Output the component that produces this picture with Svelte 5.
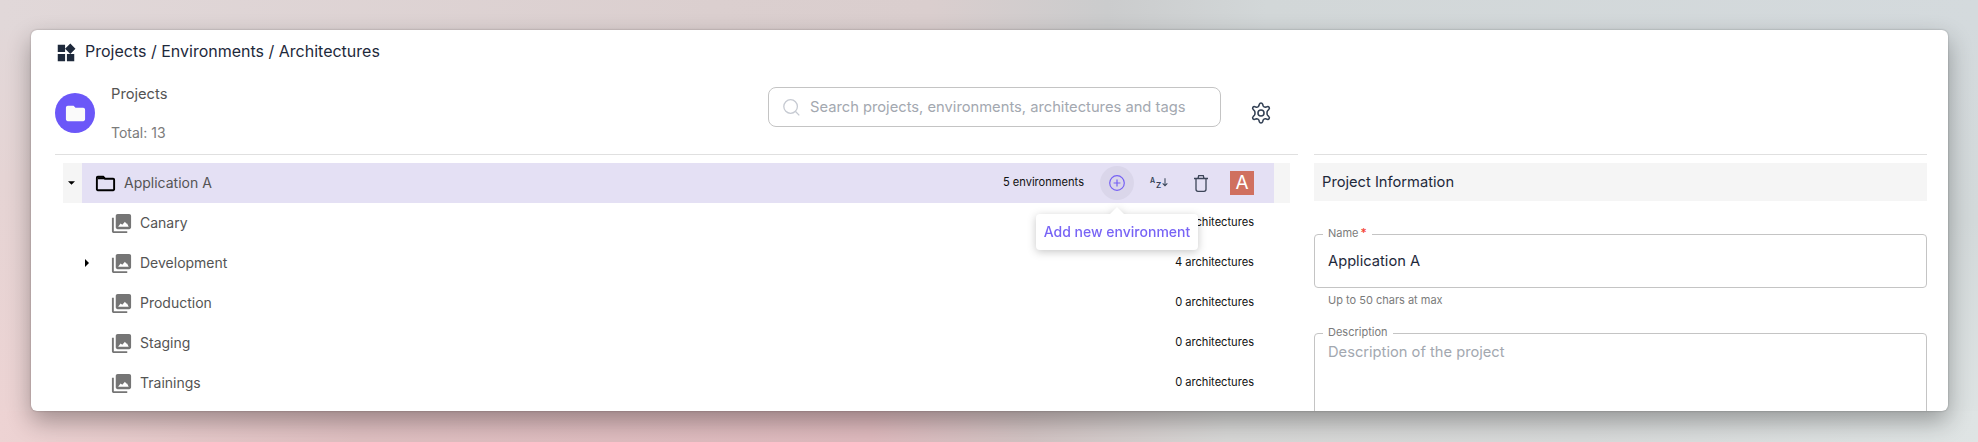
<script>
  const rows = [
    { name: 'Canary', count: '0 architectures', open: false },
    { name: 'Development', count: '4 architectures', open: true },
    { name: 'Production', count: '0 architectures', open: false },
    { name: 'Staging', count: '0 architectures', open: false },
    { name: 'Trainings', count: '0 architectures', open: false }
  ];
</script>

<div class="page">
  <main class="card">
    <header class="title">
      <svg class="widgets" viewBox="0 0 24 24"><path d="M13 13v8h8v-8zM3 21h8v-8H3zM3 3v8h8V3zm13.66-1.31L11 7.34 16.66 13l5.66-5.66z" /></svg>
      <h1>Projects / Environments / Architectures</h1>
    </header>
    <div class="columns">
      <section class="left">
        <div class="summary">
          <div class="avatar"><svg viewBox="0 0 24 24"><path d="M10 4H4c-1.1 0-2 .9-2 2v12c0 1.100.9 2 2 2h16c1.100 0 2-.9 2-2V8c0-1.100-.9-2-2-2h-8z" /></svg></div>
          <div class="totals"><span class="t1">Projects</span><span class="t2">Total: 13</span></div>
          <div class="search">
            <svg viewBox="0 0 17 17"><circle cx="7.600" cy="7.500" r="6.800" /><path d="m12.500 12.500 3.800 3.900" /></svg>
            <span>Search projects, environments, architectures and tags</span>
          </div>
          <svg class="gear" viewBox="0 0 24 24"><path d="M9.700 4.200l.5-1.800Q10.700 1 12 1t1.800 1.400l.5 1.800q.2.7 1 1.100t1.600.3l1.800-.5q1.500-.4 2.200.8t-.4 2.300l-1.300 1.400q-.6.700-.6 1.500v1.800q0 .8.6 1.500l1.300 1.400q1.100 1.100.4 2.300t-2.200.8l-1.800-.5q-.8-.2-1.600.3t-1 1.100l-.5 1.800Q13.300 23 12 23t-1.800-1.400l-.5-1.800q-.2-.7-1-1.100t-1.600-.3l-1.800.5q-1.500.4-2.200-.8t.4-2.300l1.300-1.400q.6-.7.6-1.500v-1.800q0-.8-.6-1.500L3.500 8.200Q2.400 7.100 3.100 5.900t2.200-.8l1.800.5q.8.2 1.600-.3t1-1.100z" /><circle cx="12" cy="12" r="3.300" /></svg>
        </div>
        <div class="tree">
          <div class="parent">
            <div class="toggle"><svg viewBox="0 0 8 4"><path d="M0 0h8L4 4z" /></svg></div>
            <div class="selected">
              <svg class="folder" viewBox="0 0 24 24"><path d="m9.170 6 2 2H20v10H4V6zM10 4H4c-1.100 0-1.990.9-1.990 2L2 18c0 1.100.9 2 2 2h16c1.100 0 2-.9 2-2V8c0-1.100-.9-2-2-2h-8z" /><path d="M4 5.500h5.500l2 2H4z" /></svg>
              <span class="name">Application A</span>
              <span class="count">5 environments</span>
              <div class="add">
                <svg viewBox="0 0 16 16"><circle cx="8" cy="8" r="7.300" /><path d="M8 4.600v6.800M4.600 8h6.800" /></svg>
                <div class="tip">Add new environment</div>
              </div>
              <div class="sort"><span class="a">A</span><span class="z">Z</span><svg viewBox="0 0 7 10"><path d="M3.500 0v8.700M.8 6l2.700 2.800L6.200 6" /></svg></div>
              <svg class="trash" viewBox="0 0 14 17"><path d="M0 3.500h14M2 3.700v10.600q0 2 2 2h6q2 0 2-2V3.700M4 3.500 4.700.7h4.600L10 3.500" /></svg>
              <div class="letter">A</div>
            </div>
          </div>
          {#each rows as row}
            <div class="row">
              <div class="arrow">{#if row.open}<svg viewBox="0 0 4 8"><path d="M0 0v8l4-4z" /></svg>{/if}</div>
              <svg class="stack" viewBox="0 0 24 24"><path fill-rule="evenodd" d="M22 16V4c0-1.100-.9-2-2-2H8c-1.100 0-2 .9-2 2v12c0 1.100.9 2 2 2h12c1.100 0 2-.9 2-2M8.500 15.400l2.600-3.500 1.700 1.500 2.800-3.100 1.500 2 .6-.5 1.800 3.600zM2 6v14c0 1.100.9 2 2 2h14v-2H4V6z" /></svg>
              <span class="name">{row.name}</span>
              <span class="count">{row.count}</span>
            </div>
          {/each}
        </div>
      </section>
      <section class="right">
        <h2>Project Information</h2>
        <fieldset class="field one">
          <legend>Name<b>*</b></legend>
          <div class="value">Application A</div>
        </fieldset>
        <div class="hint">Up to 50 chars at max</div>
        <fieldset class="field two">
          <legend>Description</legend>
          <div class="placeholder">Description of the project</div>
        </fieldset>
      </section>
    </div>
  </main>
</div>

<style>
  :global(body) { overflow: hidden; }
  .page, .page * { box-sizing: border-box; }
  .page {
    width: 1978px;
    height: 442px;
    padding: 30px 30px 31px 31px;
    overflow: hidden;
    font-family: Inter, sans-serif;
    background:
      linear-gradient(90deg, #e1d8d9 0, #dbcfcf 36%, #dacece 47%, #cbcccd 56%, #d2d7d8 64%, #d4dadd 100%) 0 0 / 100% 30px no-repeat,
      linear-gradient(90deg, #edd3d3 0, #dfbfc1 18%, #deb9bd 44%, #d2c3c3 52%, #d7d7d6 62%, #d8dada 80%, #dfe4e4 100%) 0 100% / 100% 31px no-repeat,
      linear-gradient(180deg, #e1d8d9 0, #e5d4d4 40%, #edd3d3 100%) 0 0 / 50% 100% no-repeat,
      linear-gradient(180deg, #d4dadd 0, #d3d9da 50%, #dfe4e4 100%) 100% 0 / 50% 100% no-repeat;
  }
  .card {
    width: 1917px;
    height: 381px;
    overflow: hidden;
    padding: 0 21px 0 24px;
    border-radius: 6px;
    background: #fff;
    box-shadow: 0 10px 24px rgba(0, 0, 0, .32), 0 0 2px rgba(0, 0, 0, .3);
  }
  .title { display: flex; align-items: center; height: 43px; gap: 8px; }
  .widgets { width: 22px; height: 22px; margin-top: 2px; fill: #1e293b; }
  h1 { margin: 0 0 2px; font-size: 16px; line-height: 24px; font-weight: 400; color: #1e293b; }
  .columns { display: flex; gap: 16px; height: 338px; }
  .left { width: 1243px; }
  .summary { display: flex; align-items: flex-start; height: 82px; border-bottom: 1px solid #e0e0e0; }
  .avatar { display: flex; align-items: center; justify-content: center; width: 40px; height: 40px; margin-top: 20px; border-radius: 50%; background: #6b57f8; }
  .avatar svg { width: 23px; height: 23px; fill: #fafafa; }
  .totals { display: flex; flex-direction: column; margin: 11px 0 0 16px; line-height: 20px; color: #545454; }
  .t1 { font-size: 14.700px; }
  .t2 { margin-top: 19px; font-size: 14px; color: #7b7b7b; }
  .search { display: flex; align-items: center; width: 453px; height: 40px; margin: 14px 0 0 auto; padding-left: 14px; border: 1px solid #c4c4c4; border-radius: 8px; color: #a3a8b0; font-size: 14.720px; gap: 10px; }
  .search svg { width: 17px; height: 17px; fill: none; stroke: #c6cad2; stroke-width: 1.3; }
  .gear { width: 22px; height: 22px; margin: 29px 26px 0 29px; overflow: visible; fill: none; stroke: #334155; stroke-width: 1.700; }
  .tree { padding: 8px 8px 0; }
  .parent { display: flex; height: 40px; padding-right: 16px; background: #f5f5f5; }
  .toggle { display: flex; align-items: center; width: 19px; padding-left: 4.500px; }
  .toggle svg { width: 7px; height: 4px; }
  .selected { display: flex; align-items: center; flex: 1; padding: 0 20px 0 12px; background: #e4e0f4; }
  .folder { width: 23px; height: 23px; margin-right: 7px; }
  .name { margin-bottom: 1px; font-size: 14px; line-height: 18px; color: #545454; }
  .count { margin: 0 0 2px auto; font-size: 11.120px; color: #111; }
  .add { position: relative; display: flex; align-items: center; justify-content: center; width: 34px; height: 34px; margin-left: 16px; border-radius: 50%; background: #dad6ea; }
  .add svg { width: 16px; height: 16px; fill: none; stroke: #7661f4; stroke-width: 1.200; }
  .tip { position: absolute; left: -64px; top: 48px; z-index: 2; width: 162px; height: 36px; border-radius: 4px; background: #fff; color: #7864f5; font-size: 14px; line-height: 36px; font-weight: 500; text-align: center; white-space: nowrap; filter: drop-shadow(0 2px 4px rgba(0, 0, 0, .22)); }
  .tip::before { content: ''; position: absolute; left: 74px; top: -7px; border: solid transparent; border-width: 0 7px 7px; border-bottom-color: #fff; }
  .sort { display: flex; justify-content: space-between; width: 18px; height: 12px; margin-left: 16px; color: #334155; font-size: 7px; line-height: 7px; font-weight: 600; }
  .z { margin-top: 5px; font-size: 8px; }
  .sort svg { width: 6px; height: 9px; margin-top: 1px; fill: none; stroke: #334155; stroke-width: 1.200; }
  .trash { width: 14px; height: 17px; margin-left: 26px; fill: none; stroke: #3c4558; stroke-width: 1.300; }
  .letter { width: 24px; height: 24px; margin-left: 22px; background: #d0705f; color: #fff; font-size: 19px; line-height: 24px; text-align: center; }
  .row { display: flex; align-items: center; height: 40px; padding-right: 36px; }
  .arrow { display: flex; width: 47px; padding-left: 22px; }
  .arrow svg { width: 4px; height: 8px; }
  .stack { width: 23px; height: 23px; margin-right: 7px; fill: #757575; }
  .right { width: 613px; padding-top: 81px; }
  .right::before { content: ''; display: block; height: 1px; background: #e0e0e0; }
  h2 { height: 38px; margin: 8px 0 26px; padding-left: 8px; background: #f5f5f5; color: #1e293b; font-size: 14.700px; line-height: 38px; font-weight: 400; }
  fieldset { min-width: 0; margin: 0; padding: 0 13px; border: 1px solid #c4c4c4; border-radius: 4px; }
  legend { height: 14px; margin-left: -5px; padding: 0 5px 2px; font-size: 11px; line-height: 12px; color: #7b7b7b; }
  b { margin-left: 2px; color: #f44336; font-size: 12px; font-weight: 500; }
  .one { height: 61px; }
  .value { margin-top: 10px; font-size: 14.700px; line-height: 20px; color: #1e293b; }
  .hint { height: 38px; padding: 4px 0 0 14px; font-size: 11px; line-height: 16px; color: #7b7b7b; }
  .two { height: 140px; }
  .placeholder { margin-top: 2px; font-size: 14.700px; line-height: 20px; color: #a3a8b0; }
</style>
